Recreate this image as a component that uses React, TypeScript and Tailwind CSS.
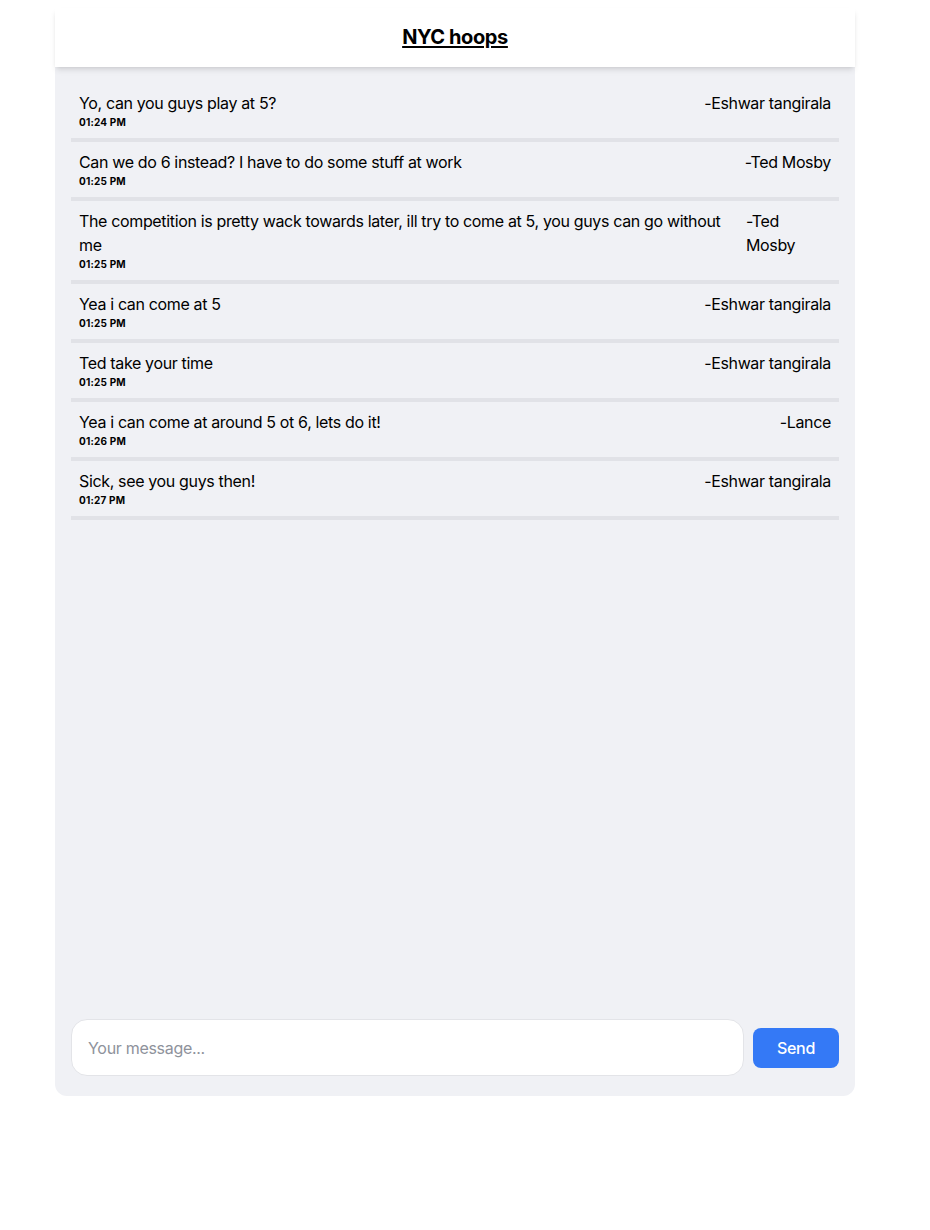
import React, { useState } from 'react';

type Message = {
  text: string;
  time: string;
  author: string;
  narrowName?: boolean;
};

const MESSAGES: Message[] = [
  { text: 'Yo, can you guys play at 5?', time: '01:24 PM', author: 'Eshwar tangirala' },
  { text: 'Can we do 6 instead? I have to do some stuff at work', time: '01:25 PM', author: 'Ted Mosby' },
  {
    text: 'The competition is pretty wack towards later, ill try to come at 5, you guys can go without me',
    time: '01:25 PM',
    author: 'Ted Mosby',
    narrowName: true,
  },
  { text: 'Yea i can come at 5', time: '01:25 PM', author: 'Eshwar tangirala' },
  { text: 'Ted take your time', time: '01:25 PM', author: 'Eshwar tangirala' },
  { text: 'Yea i can come at around 5 ot 6, lets do it!', time: '01:26 PM', author: 'Lance' },
  { text: 'Sick, see you guys then!', time: '01:27 PM', author: 'Eshwar tangirala' },
];

function MessageRow({ msg }: { msg: Message }) {
  return (
    <div className="flex items-start border-b-4 border-[#e1e2e7] px-2 py-2">
      <div className="min-w-0 flex-1 pr-6">
        <p className="text-base leading-6 tracking-[-0.35px] text-black">{msg.text}</p>
        <p className="text-[10px] font-bold leading-[15px] tracking-[0.2px] text-black">{msg.time}</p>
      </div>
      {msg.narrowName ? (
        <p className="w-[85px] shrink-0 text-base leading-6 tracking-[-0.35px] text-black">
          -Ted
          <br />
          Mosby
        </p>
      ) : (
        <p className="shrink-0 text-right text-base leading-6 tracking-[-0.35px] text-black">-{msg.author}</p>
      )}
    </div>
  );
}

export default function App() {
  const [draft, setDraft] = useState('');

  return (
    <div
      className="min-h-[1230px] bg-white"
      style={{ fontFamily: "Inter, 'Noto Sans', 'Liberation Sans', sans-serif" }}
    >
      <div className="ml-[55px] mt-2 flex h-[1088px] w-[800px] flex-col rounded-b-xl bg-[#f0f1f5]">
        {/* Header */}
        <div className="relative z-10 flex h-[59px] items-center justify-center bg-white shadow-md">
          <h1 className="-mt-0.5 text-xl font-bold tracking-[-0.4px] text-black underline underline-offset-2">
            NYC hoops
          </h1>
        </div>

        {/* Messages */}
        <div className="flex flex-1 flex-col px-4 pt-4">
          {MESSAGES.map((m, i) => (
            <MessageRow key={i} msg={m} />
          ))}
        </div>

        {/* Composer */}
        <div className="flex items-center gap-[9px] px-4 pb-5">
          <input
            value={draft}
            onChange={(e) => setDraft(e.target.value)}
            placeholder="Your message..."
            className="h-[57px] flex-1 rounded-2xl border border-[#e3e4e8] bg-white px-4 text-base tracking-[-0.3px] text-black placeholder:text-[#8e929b] outline-none"
          />
          <button className="h-10 w-[86px] rounded-lg bg-[#3479f6] text-base font-medium tracking-[-0.3px] text-white">
            Send
          </button>
        </div>
      </div>
    </div>
  );
}
